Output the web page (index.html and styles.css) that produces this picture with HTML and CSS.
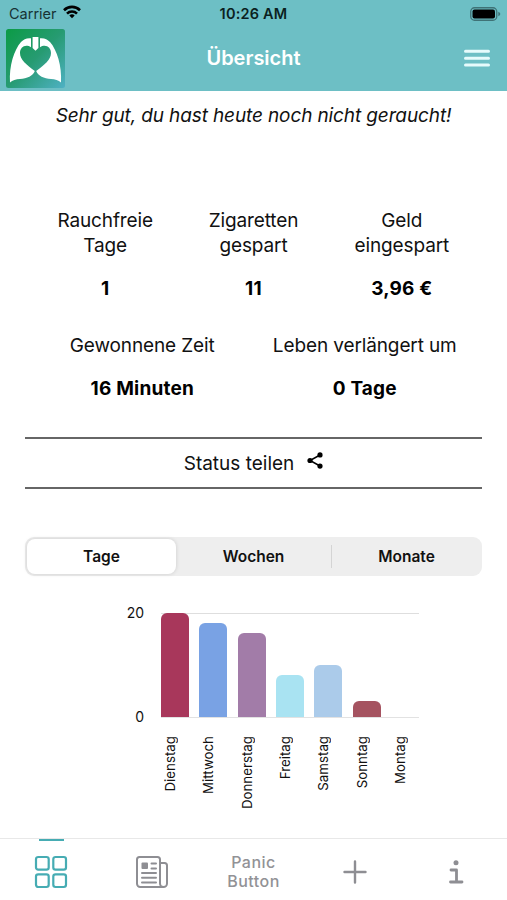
FILE: index.html
```html
<!DOCTYPE html>
<html lang="de">
<head>
    <meta charset="UTF-8">
    <meta name="viewport" content="width=device-width, initial-scale=1.0">
    <title>Übersicht</title>
    <link rel="stylesheet" href="styles.css">
</head>
<body>
    <header class="header">
        <div class="status-bar">
            <div class="carrier">
                <span>Carrier</span>
                <svg width="18" height="14" viewBox="0 0 18 14" fill="none" stroke="#000" stroke-width="2.6">
                    <path d="M1 5.2a11.4 11.4 0 0 1 16 0"/>
                    <path d="M4 8.6a7.1 7.1 0 0 1 10 0"/>
                    <path d="M6.3 10.5a3.9 3.9 0 0 1 5.4 0L9 13.3z" fill="#000" stroke="none"/>
                </svg>
            </div>
            <div class="time">10:26 AM</div>
            <svg class="battery" width="31" height="14" viewBox="0 0 31 14">
                <rect x=".75" y=".75" width="26" height="12.5" rx="3.8" fill="none" stroke="#3f7276" stroke-width="1.3"/>
                <rect x="2.5" y="2.4" width="22.5" height="9.2" rx="2" fill="#000"/>
                <path d="M28.3 4.8q2 .7 2 2.2t-2 2.2z" fill="#3f7276"/>
            </svg>
        </div>
        <div class="title-bar">
            <svg class="logo" width="59" height="59" viewBox="0 0 59 59">
                <defs>
                    <linearGradient id="logo-bg" x1="0" y1="0" x2="1" y2="1">
                        <stop offset="0" stop-color="#0b9b45"/>
                        <stop offset=".5" stop-color="#279b72"/>
                        <stop offset="1" stop-color="#4fb1c4"/>
                    </linearGradient>
                </defs>
                <rect width="59" height="59" rx="2.5" fill="url(#logo-bg)"/>
                <g fill="#fff">
                    <path d="M26.600 8h5.800v11l-2.900 2.800-2.900-2.800z"/>
                    <path d="M25 9.200v9C19 14.600 14 18.500 14 24c0 7 6.500 11.500 14.800 18-1.700 5-7.800 7.500-14.800 8-4 .3-7.500 1-10 3.500C3 37 8 21 15 13c2.800-3 5.500-4.200 10-3.800z"/>
                    <path d="M34 9.200v9c6-3.600 11 .3 11 5.800 0 7-6.500 11.500-14.800 18 1.700 5 7.800 7.500 14.800 8 4 .3 7.500 1 10 3.500C56 37 51 21 44 13c-2.800-3-5.500-4.200-10-3.800z"/>
                </g>
            </svg>
            <h1>Übersicht</h1>
            <svg class="menu" width="26" height="18" viewBox="0 0 26 18" stroke="#e6fbfc" stroke-width="3" stroke-linecap="round">
                <path d="M1.5 2.3h23M1.5 9.2h23M1.5 16.1h23"/>
            </svg>
        </div>
    </header>

    <main>
        <p class="message">Sehr gut, du hast heute noch nicht geraucht!</p>

        <div class="stats stats-3">
            <div class="stat"><p>Rauchfreie<br>Tage</p><strong>1</strong></div>
            <div class="stat"><p>Zigaretten<br>gespart</p><strong>11</strong></div>
            <div class="stat"><p>Geld<br>eingespart</p><strong>3,96 €</strong></div>
        </div>
        <div class="stats stats-2">
            <div class="stat"><p>Gewonnene Zeit</p><strong>16 Minuten</strong></div>
            <div class="stat"><p>Leben verlängert um</p><strong>0 Tage</strong></div>
        </div>

        <div class="share">
            <span>Status teilen</span>
            <svg width="16" height="17" viewBox="0 0 16 17">
                <path d="M13 3L3 8.5l10 5.5" fill="none" stroke="#000" stroke-width="1.5"/>
                <circle cx="13" cy="2.9" r="2.6"/>
                <circle cx="3" cy="8.5" r="2.6"/>
                <circle cx="13" cy="14.1" r="2.6"/>
            </svg>
        </div>

        <div class="segments">
            <div class="segment active">Tage</div>
            <div class="segment">Wochen</div>
            <div class="segment divided">Monate</div>
        </div>

        <div class="chart">
            <div class="axis"><span>20</span><span>0</span></div>
            <div class="plot">
                <div class="bars">
                    <div class="bar tuesday" style="height: 104px"></div>
                    <div class="bar wednesday" style="height: 93.6px"></div>
                    <div class="bar thursday" style="height: 83.2px"></div>
                    <div class="bar friday" style="height: 41.6px"></div>
                    <div class="bar saturday" style="height: 52px"></div>
                    <div class="bar sunday" style="height: 15.6px"></div>
                    <div class="bar" style="height: 0"></div>
                </div>
                <div class="days">
                    <span>Dienstag</span>
                    <span>Mittwoch</span>
                    <span>Donnerstag</span>
                    <span>Freitag</span>
                    <span>Samstag</span>
                    <span>Sonntag</span>
                    <span>Montag</span>
                </div>
            </div>
        </div>
    </main>

    <nav class="tabs">
        <div class="tab active">
            <svg width="34" height="34" viewBox="0 0 34 34" fill="none" stroke="#46acb3" stroke-width="2.2">
                <rect x="2" y="2" width="12.7" height="12.7" rx="2.2"/>
                <rect x="19.3" y="2" width="12.7" height="12.7" rx="2.2"/>
                <rect x="2" y="19.3" width="12.7" height="12.7" rx="2.2"/>
                <rect x="19.3" y="19.3" width="12.7" height="12.7" rx="2.2"/>
            </svg>
        </div>
        <div class="tab">
            <svg width="34" height="34" viewBox="0 0 34 34" fill="none" stroke="#8e8e93" stroke-width="2" stroke-linecap="round">
                <path d="M28.5 32H5.2A3.2 3.2 0 0 1 2 28.8V4.5A2.5 2.5 0 0 1 4.5 2h18A2.5 2.5 0 0 1 25 4.5v24a3.5 3.5 0 0 0 7 0V10.5A2.5 2.5 0 0 0 29.5 8H25"/>
                <path d="M16.5 8.5H21M16.5 13.500H21M7 18h14M7 22.7h14M7 27.4h14"/>
                <rect x="6.5" y="7.5" width="6.5" height="6.5" rx="1" fill="#8e8e93" stroke="none"/>
            </svg>
        </div>
        <div class="tab tab-text">
            <span>Panic</span>
            <span>Button</span>
        </div>
        <div class="tab">
            <svg width="24" height="24" viewBox="0 0 24 24" stroke="#8e8e93" stroke-width="2.4" stroke-linecap="round">
                <path d="M12 1.5v21M1.5 12h21"/>
            </svg>
        </div>
        <div class="tab">
            <svg width="16" height="24" viewBox="0 0 16 24" fill="none" stroke="#8e8e93" stroke-width="2.8" stroke-linecap="round" stroke-linejoin="round">
                <path d="M3 10h5.5v12M2.5 22h11.5"/>
                <circle cx="8" cy="2.8" r="2.5" fill="#8e8e93" stroke="none"/>
            </svg>
        </div>
    </nav>
</body>
</html>
```
FILE: styles.css
```css
* {
    box-sizing: border-box;
}
body {
    margin: 0;
    height: 900px;
    display: flex;
    flex-direction: column;
    background: #fff;
    color: #111;
    font-family: Inter, "Liberation Sans", sans-serif;
    font-size: 19px;
}
p, h1 {
    margin: 0;
}
svg {
    display: block;
}
.header {
    height: 91px;
    background: #6dbfc5;
}
.status-bar {
    display: grid;
    grid-template-columns: 1fr auto 1fr;
    align-items: center;
    height: 27px;
    padding: 0 6px;
    font-size: 14.5px;
}
.carrier {
    display: flex;
    gap: 6px;
    padding-left: 3px;
    color: #173234;
}
.time {
    font-weight: 600;
    letter-spacing: 0.2px;
    color: #0b1f21;
}
.battery {
    justify-self: end;
}
.title-bar {
    display: grid;
    grid-template-columns: 1fr auto 1fr;
    align-items: center;
    height: 62px;
    padding: 0 6px;
}
.title-bar h1 {
    color: #fff;
    font-size: 20px;
    font-weight: 600;
}
.menu {
    justify-self: end;
    margin-right: 11px;
}
main {
    flex: 1;
    padding: 0 25px;
}
.message {
    padding-top: 13px;
    line-height: 24px;
    letter-spacing: -0.12px;
    text-align: center;
    font-style: italic;
}
.stats {
    display: grid;
    padding: 0 6px;
    text-align: center;
}
.stats-3 {
    grid-template-columns: repeat(3, 1fr);
    margin-top: 81px;
}
.stats-2 {
    grid-template-columns: repeat(2, 1fr);
    margin-top: 32px;
}
.stat {
    line-height: 24.5px;
}
.stat p {
    letter-spacing: -0.12px;
}
.stat strong {
    display: block;
    margin-top: 19px;
    font-weight: 700;
    letter-spacing: 0.2px;
    color: #000;
}
.share {
    display: flex;
    justify-content: center;
    gap: 13px;
    height: 52px;
    margin-top: 35px;
    border: solid #666;
    border-width: 2px 0;
    line-height: 49px;
}
.share svg {
    margin-top: 13px;
}
.segments {
    display: grid;
    grid-template-columns: 149px 155px 1fr;
    height: 39px;
    margin-top: 48px;
    padding: 2px;
    border-radius: 9px;
    background: #eee;
    font-size: 15.5px;
    font-weight: 600;
    line-height: 35px;
    text-align: center;
}
.segment.active {
    border-radius: 8px;
    background: #fff;
    box-shadow: 0 0 4px rgba(0, 0, 0, 0.14);
}
.segment.divided {
    padding-left: 2px;
    background: linear-gradient(#d4d4d4, #d4d4d4) left center / 1px 23px no-repeat;
}
.chart {
    display: flex;
    gap: 17px;
    margin-top: 36px;
    padding-left: 94px;
}
.axis {
    display: flex;
    flex-direction: column;
    justify-content: space-between;
    width: 25px;
    height: 124px;
    margin-top: -9px;
    font-size: 14px;
    line-height: 20px;
    text-align: right;
}
.plot {
    width: 258px;
    padding-top: 1px;
}
.bars {
    display: flex;
    justify-content: space-between;
    align-items: flex-end;
    height: 105px;
    border-bottom: 1px solid #e2e2e2;
    background: linear-gradient(#dedede, #dedede) top / 100% 1px no-repeat;
}
.bar {
    width: 28px;
    border-radius: 6px 6px 0 0;
}
.tuesday {
    background: #a8375b;
}
.wednesday {
    background: #79a2e4;
}
.thursday {
    background: #a27ca8;
}
.friday {
    background: #a9e3f2;
}
.saturday {
    background: #abcbea;
}
.sunday {
    background: #a55360;
}
.days {
    display: flex;
    justify-content: space-between;
    align-items: flex-start;
    width: 250px;
    margin: 18px 0 0 -1px;
    font-size: 13.3px;
    line-height: 20px;
}
.days span {
    writing-mode: vertical-rl;
    transform: rotate(180deg);
}
.tabs {
    display: grid;
    grid-template-columns: repeat(5, 1fr);
    height: 62px;
    border-top: 1px solid #e8e8e8;
}
.tab {
    display: flex;
    align-items: center;
    justify-content: center;
    padding-top: 5px;
    color: #929296;
}
.tab.active {
    background: linear-gradient(#46acb3, #46acb3) 39px 0 / 25px 2px no-repeat;
}
.tab-text {
    flex-direction: column;
    font-size: 16px;
    font-weight: 500;
    line-height: 19px;
    letter-spacing: 0.5px;
}
```
